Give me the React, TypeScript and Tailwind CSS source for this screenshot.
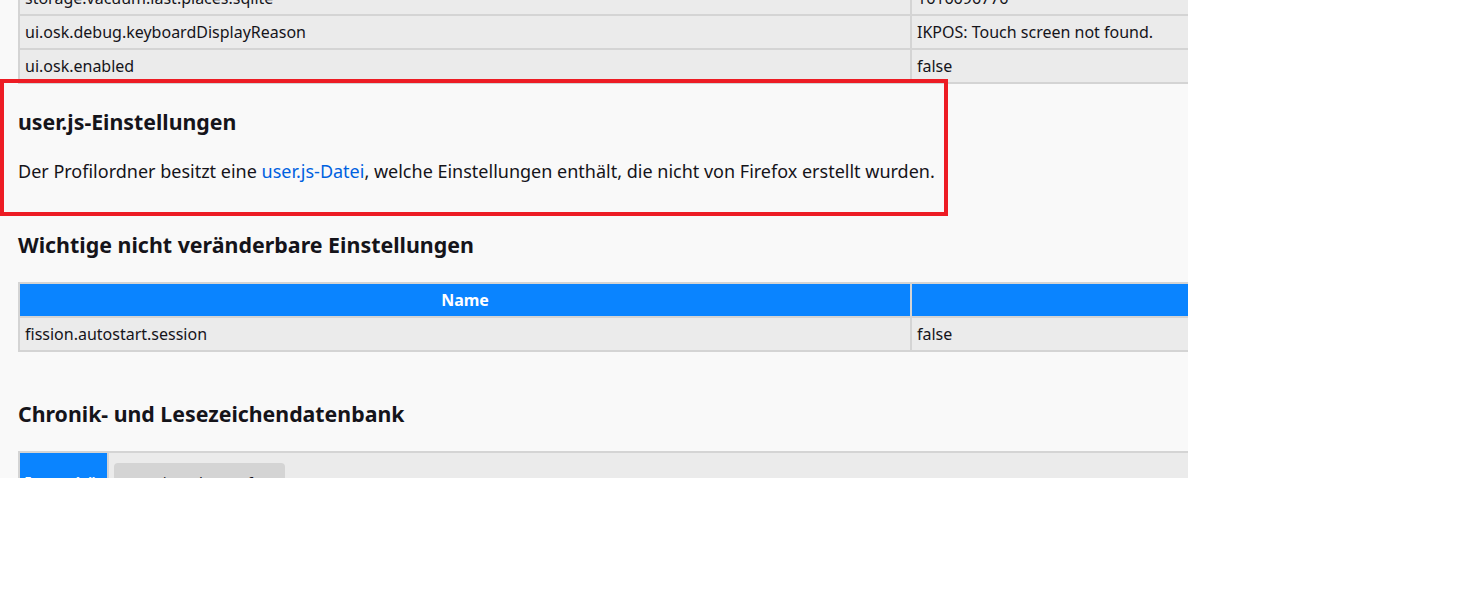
import React from "react";

const font = { fontFamily: '"Noto Sans", "Open Sans", sans-serif' };

export default function App() {
  return (
    <div className="w-[1457px] h-[613px] bg-white" style={font}>
      <div className="relative w-[1188px] h-[478px] overflow-hidden bg-[#f9f9f9] text-[#15141a]">
        <div className="pl-[18px]">
          {/* Table 1 */}
          <table className="-mt-[20px] w-[1400px] border-collapse text-[16px] leading-[22px]">
            <tbody>
              {[
                ["storage.vacuum.last.places.sqlite", "1616696776"],
                ["ui.osk.debug.keyboardDisplayReason", "IKPOS: Touch screen not found."],
                ["ui.osk.enabled", "false"],
              ].map(([a, b]) => (
                <tr key={a} className="bg-[#ebebeb]">
                  <td className="w-[892px] h-[34px] border-2 border-[#d4d4d4] px-[5px] py-0">{a}</td>
                  <td className="h-[34px] border-2 border-[#d4d4d4] px-[5px] py-0">{b}</td>
                </tr>
              ))}
            </tbody>
          </table>

          <h2 className="mt-[24px] text-[21.3px] leading-[28px] font-bold">user.js-Einstellungen</h2>
          <p className="mt-[23px] text-[18px] leading-[24px]">
            Der Profilordner besitzt eine <span className="text-[#0061e0]">user.js-Datei</span>, welche Einstellungen enthält, die nicht von Firefox erstellt wurden.
          </p>

          <h2 className="mt-[48px] text-[21.4px] leading-[28px] font-bold">Wichtige nicht veränderbare Einstellungen</h2>

          <table className="mt-[23px] w-[1400px] border-collapse text-[16px] leading-[22px]">
            <thead>
              <tr className="bg-[#0a84ff] text-white">
                <th className="w-[892px] h-[34px] border-2 border-[#d4d4d4] px-[5px] py-0 font-bold text-center">Name</th>
                <th className="h-[34px] border-2 border-[#d4d4d4] px-[5px] py-0"></th>
              </tr>
            </thead>
            <tbody>
              <tr className="bg-[#ebebeb]">
                <td className="h-[34px] border-2 border-[#d4d4d4] px-[5px] py-0">fission.autostart.session</td>
                <td className="h-[34px] border-2 border-[#d4d4d4] px-[5px] py-0">false</td>
              </tr>
            </tbody>
          </table>

          <h2 className="mt-[48px] text-[21.3px] leading-[28px] font-bold">Chronik- und Lesezeichendatenbank</h2>

          <table className="mt-[23px] w-[1400px] border-collapse text-[16px] leading-[22px]">
            <tbody>
              <tr>
                <th className="w-[89px] h-[60px] border-2 border-[#d4d4d4] bg-[#0a84ff] text-white pl-[5px] pr-0 pt-[19px] align-top text-left font-bold whitespace-nowrap overflow-hidden">Integrität</th>
                <td className="h-[60px] border-2 border-[#d4d4d4] bg-[#ebebeb] px-[5px] pt-[10px] align-top">
                  <button className="block w-[171px] h-[32px] rounded-[4px] bg-[#d4d4d4] px-[5px] text-left text-[15px] leading-[22px] pt-[5px] align-top">Integrität überprüfen</button>
                </td>
              </tr>
            </tbody>
          </table>
        </div>

        <div className="absolute left-0 top-[79px] w-[948px] h-[137px] border-4 border-[#ed1c24]"></div>
      </div>
    </div>
  );
}
